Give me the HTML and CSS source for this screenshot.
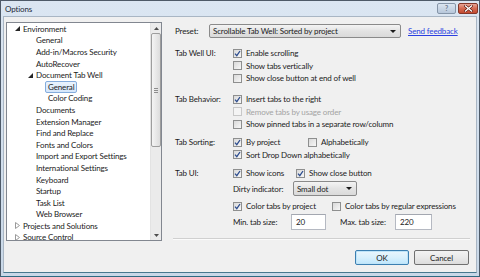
FILE: index.html
```html
<!DOCTYPE html>
<html>
<head>
<meta charset="utf-8">
<title>Options</title>
<link rel="stylesheet" href="styles.css">
</head>
<body>
<div class="window">
  <div class="titlebar">
    <span class="title">Options</span>
    <div class="caption-btns">
      <span class="cbtn help">?</span>
      <span class="cbtn close"><svg width="9" height="7" viewBox="0 0 9 7"><path d="M1.5 1 L7.5 6 M7.5 1 L1.5 6" stroke="#5a1a10" stroke-width="2.6" stroke-linecap="square"/><path d="M1.5 1 L7.5 6 M7.5 1 L1.5 6" stroke="#ffffff" stroke-width="1.4" stroke-linecap="square"/></svg></span>
    </div>
  </div>
  <div class="client">
    <div class="main">
      <div class="tree">
        <ul class="items">
          <li class="l0"><span class="tw"><svg width="5" height="5" viewBox="0 0 5 5"><polygon points="5,0 5,5 0,5" fill="#262626"/></svg></span>Environment</li>
          <li class="l1">General</li>
          <li class="l1">Add-in/Macros Security</li>
          <li class="l1">AutoRecover</li>
          <li class="l1t"><span class="tw"><svg width="5" height="5" viewBox="0 0 5 5"><polygon points="5,0 5,5 0,5" fill="#262626"/></svg></span>Document Tab Well</li>
          <li class="l2"><span class="sel">General</span></li>
          <li class="l2"><span class="nsel">Color Coding</span></li>
          <li class="l1">Documents</li>
          <li class="l1">Extension Manager</li>
          <li class="l1">Find and Replace</li>
          <li class="l1">Fonts and Colors</li>
          <li class="l1">Import and Export Settings</li>
          <li class="l1">International Settings</li>
          <li class="l1">Keyboard</li>
          <li class="l1">Startup</li>
          <li class="l1">Task List</li>
          <li class="l1">Web Browser</li>
          <li class="l0"><span class="tw"><svg width="5" height="7" viewBox="0 0 5 7"><polygon points="0.5,0.5 4.5,3.5 0.5,6.5" fill="#ffffff" stroke="#9a9a9a" stroke-width="1"/></svg></span>Projects and Solutions</li>
          <li class="l0"><span class="tw"><svg width="5" height="7" viewBox="0 0 5 7"><polygon points="0.5,0.5 4.5,3.5 0.5,6.5" fill="#ffffff" stroke="#9a9a9a" stroke-width="1"/></svg></span>Source Control</li>
        </ul>
        <div class="vscroll">
          <div class="arrow"><svg width="5" height="3" viewBox="0 0 5 3"><polygon points="2.5,0 5,3 0,3" fill="#4d4d4d"/></svg></div>
          <div class="track">
            <div class="thumb"><span class="grip"></span></div>
          </div>
          <div class="arrow"><svg width="5" height="3" viewBox="0 0 5 3"><polygon points="0,0 5,0 2.5,3" fill="#4d4d4d"/></svg></div>
        </div>
      </div>
      <div class="panel">
        <div class="preset-row">
          <span class="preset-label">Preset:</span>
          <div class="combo preset-combo"><span>Scrollable Tab Well: Sorted by project</span><span class="caret"></span></div>
          <a class="link" href="#">Send feedback</a>
        </div>

        <div class="group g1">
          <span class="glabel">Tab Well UI:</span>
          <div class="opts">
            <div class="row"><span class="cb"><svg width="7" height="7" viewBox="0 0 7 7"><path d="M1 3.6 L2.8 5.6 L6 1" fill="none" stroke="#2d4d8f" stroke-width="1.3"/></svg></span>Enable scrolling</div>
            <div class="row"><span class="cb"></span>Show tabs vertically</div>
            <div class="row"><span class="cb"></span>Show close button at end of well</div>
          </div>
        </div>

        <div class="group g2">
          <span class="glabel">Tab Behavior:</span>
          <div class="opts">
            <div class="row"><span class="cb"><svg width="7" height="7" viewBox="0 0 7 7"><path d="M1 3.6 L2.8 5.6 L6 1" fill="none" stroke="#2d4d8f" stroke-width="1.3"/></svg></span>Insert tabs to the right</div>
            <div class="row disabled"><span class="cb"></span>Remove tabs by usage order</div>
            <div class="row"><span class="cb"></span>Show pinned tabs in a separate row/column</div>
          </div>
        </div>

        <div class="group g3">
          <span class="glabel">Tab Sorting:</span>
          <div class="opts">
            <div class="row">
              <span class="item w75"><span class="cb"><svg width="7" height="7" viewBox="0 0 7 7"><path d="M1 3.6 L2.8 5.6 L6 1" fill="none" stroke="#2d4d8f" stroke-width="1.3"/></svg></span>By project</span>
              <span class="item"><span class="cb"></span>Alphabetically</span>
            </div>
            <div class="row"><span class="cb"><svg width="7" height="7" viewBox="0 0 7 7"><path d="M1 3.6 L2.8 5.6 L6 1" fill="none" stroke="#2d4d8f" stroke-width="1.3"/></svg></span>Sort Drop Down alphabetically</div>
          </div>
        </div>

        <div class="group g4">
          <span class="glabel">Tab UI:</span>
          <div class="opts">
            <div class="row">
              <span class="item w63"><span class="cb"><svg width="7" height="7" viewBox="0 0 7 7"><path d="M1 3.6 L2.8 5.6 L6 1" fill="none" stroke="#2d4d8f" stroke-width="1.3"/></svg></span>Show icons</span>
              <span class="item"><span class="cb"><svg width="7" height="7" viewBox="0 0 7 7"><path d="M1 3.6 L2.8 5.6 L6 1" fill="none" stroke="#2d4d8f" stroke-width="1.3"/></svg></span>Show close button</span>
            </div>
            <div class="row dirty">
              <span class="flabel w60">Dirty indicator:</span>
              <div class="combo dirty-combo"><span>Small dot</span><span class="caret"></span></div>
            </div>
            <div class="row colorrow">
              <span class="item w99"><span class="cb"><svg width="7" height="7" viewBox="0 0 7 7"><path d="M1 3.6 L2.8 5.6 L6 1" fill="none" stroke="#2d4d8f" stroke-width="1.3"/></svg></span>Color tabs by project</span>
              <span class="item"><span class="cb"></span>Color tabs by regular expressions</span>
            </div>
            <div class="row sizes">
              <span class="flabel w58">Min. tab size:</span>
              <span class="input w35">20</span>
              <span class="flabel w55 ml14">Max. tab size:</span>
              <span class="input w37">220</span>
            </div>
          </div>
        </div>

        <div class="sep"></div>
      </div>
    </div>
    <div class="buttons">
      <span class="btn default">OK</span>
      <span class="btn">Cancel</span>
    </div>
  </div>
</div>
</body>
</html>
```
FILE: styles.css
```css
* { box-sizing: border-box; }
html, body { margin: 0; padding: 0; }
body {
  width: 480px;
  height: 277px;
  overflow: hidden;
  background: #ffffff;
  font-family: "Lato", "Open Sans", sans-serif;
  font-size: 8px;
  letter-spacing: -0.14px;
  color: #1b1b1b;
}
.window {
  width: 480px;
  height: 277px;
  border: 1px solid #4e5a68;
  border-bottom-color: #2e6a82;
  background: linear-gradient(#dbe6f2, #c9d8e8);
  display: flex;
  flex-direction: column;
}
.titlebar {
  height: 15px;
  flex: none;
  display: flex;
  align-items: center;
  padding-left: 4px;
  padding-right: 1px;
}
.title { flex: 1; color: #1e2a38; }
.caption-btns { display: flex; gap: 2px; align-self: flex-start; margin-top: 2px; }
.cbtn {
  height: 11px;
  border-radius: 2px;
  display: flex;
  align-items: center;
  justify-content: center;
}
.help {
  width: 19px;
  border: 1px solid #8595a8;
  background: linear-gradient(#dbe5f0, #b7c7da);
  color: #6d7c8f;
  font-weight: bold;
  font-size: 7px;
  line-height: 1;
}
.close {
  width: 20px;
  border: 1px solid #83372a;
  background: linear-gradient(#e8a595, #d46a52 50%, #c44a30);
}
.client {
  flex: 1;
  margin: 0 2px 3px 2px;
  background: #f0f0f0;
  border: 1px solid #a9b6c4;
  border-bottom-color: #48788e;
  padding: 5px 6px 0 2px;
  display: flex;
  flex-direction: column;
}
.main {
  height: 219px;
  display: flex;
}
.tree {
  width: 156px;
  height: 219px;
  flex: none;
  border: 1px solid #828790;
  background: #ffffff;
  display: flex;
}
.items {
  list-style: none;
  margin: 0;
  padding: 0;
  flex: 1;
  overflow: hidden;
}
.items li {
  height: 11.6px;
  display: flex;
  align-items: center;
  white-space: nowrap;
}
.items li.l0 { padding-left: 8px; }
.items li.l1 { padding-left: 29px; }
.items li.l1t { padding-left: 21px; }
.items li.l2 { padding-left: 38px; }
.tw {
  width: 5px;
  margin-right: 3px;
  display: flex;
  align-items: center;
  justify-content: center;
}
.sel {
  height: 11.5px;
  padding: 0 2px;
  border: 1px solid #84acdd;
  border-radius: 2px;
  background: linear-gradient(#eaf3fd, #d4e6fb);
  display: flex;
  align-items: center;
}
.nsel { padding: 0 3px; }
.vscroll {
  width: 11px;
  flex: none;
  background: #ebebeb;
  border-left: 1px solid #e3e3e3;
  display: flex;
  flex-direction: column;
}
.arrow {
  height: 10px;
  flex: none;
  display: flex;
  align-items: center;
  justify-content: center;
}
.track { flex: 1; }
.thumb {
  width: 10px;
  height: 114px;
  border: 1px solid #9d9d9d;
  border-radius: 2px;
  background: linear-gradient(90deg, #f4f4f4, #dcdcdc);
  display: flex;
  align-items: center;
  justify-content: center;
}
.grip {
  width: 4px;
  height: 5px;
  background: repeating-linear-gradient(#8d8d8d 0 1px, transparent 1px 2px);
}
.panel {
  flex: 1;
  padding: 2px 0 0 13px;
  display: flex;
  flex-direction: column;
}
.preset-row {
  height: 14px;
  display: flex;
  align-items: center;
}
.preset-label { width: 34px; flex: none; }
.combo {
  height: 14px;
  border: 1px solid #8a8a8a;
  border-radius: 2px;
  background: linear-gradient(#f4f4f4, #e3e3e3 50%, #dadada);
  display: flex;
  align-items: center;
  padding-left: 3px;
  padding-right: 4px;
}
.combo span:first-child { flex: 1; white-space: nowrap; }
.caret {
  width: 0;
  height: 0;
  border-left: 3px solid transparent;
  border-right: 3px solid transparent;
  border-top: 3px solid #1a1a1a;
}
.preset-combo { width: 192px; }
.link {
  margin-left: 7px;
  color: #2a3fe0;
  text-decoration: underline;
  white-space: nowrap;
}
.group {
  display: grid;
  grid-template-columns: 58px 1fr;
}
.g1 { margin-top: 9px; }
.g2 { margin-top: 8.5px; }
.g3 { margin-top: 5.5px; }
.g4 { margin-top: 5.75px; }
.glabel { height: 12.5px; display: flex; align-items: center; white-space: nowrap; }
.opts { display: flex; flex-direction: column; }
.row {
  height: 12.5px;
  display: flex;
  align-items: center;
  white-space: nowrap;
}
.row.disabled { color: #a3a3a3; }
.row.disabled .cb { border-color: #c8c8c8; background: #f4f4f4; }
.item { display: flex; align-items: center; }
.w75 { width: 75px; }
.w63 { width: 63px; }
.w99 { width: 99px; }
.w60 { width: 60px; }
.w58 { width: 58px; }
.w55 { width: 55px; }
.w35 { width: 35px; }
.w37 { width: 37px; }
.ml14 { margin-left: 14px; }
.cb {
  width: 9px;
  height: 9px;
  flex: none;
  margin-right: 4px;
  border: 1px solid #8e8f8f;
  background: linear-gradient(135deg, #d9d9d9, #f7f7f7);
  display: flex;
  align-items: center;
  justify-content: center;
}
.row.dirty { height: 15px; margin-top: 2px; }
.dirty-combo { width: 64px; height: 15px; }
.flabel { flex: none; }
.row.colorrow { margin-top: 3.75px; }
.row.sizes { height: 16px; margin-top: 1px; }
.input {
  height: 16px;
  border: 1px solid #b5b9c2;
  border-top-color: #a3a7b0;
  background: #ffffff;
  display: flex;
  align-items: center;
  padding-left: 4px;
}
.sep {
  margin-top: auto;
  margin-left: -2px;
  margin-bottom: 1px;
  height: 2px;
  border-top: 1px solid #d0d0d0;
  border-bottom: 1px solid #fbfbfb;
}
.buttons {
  margin-top: 9px;
  display: flex;
  justify-content: flex-end;
  gap: 5px;
  padding-right: 1px;
}
.btn {
  width: 55px;
  height: 15px;
  border: 1px solid #707070;
  border-radius: 2px;
  background: linear-gradient(#f3f3f3, #e9e9e9 50%, #dcdcdc);
  display: flex;
  align-items: center;
  justify-content: center;
}
.btn.default {
  width: 54px;
  border-color: #3c7fb1;
  box-shadow: inset 0 0 0 1px #bfe4f8;
  background: linear-gradient(#eaf6fd, #d9f0fc 50%, #bee6fd);
}
```
